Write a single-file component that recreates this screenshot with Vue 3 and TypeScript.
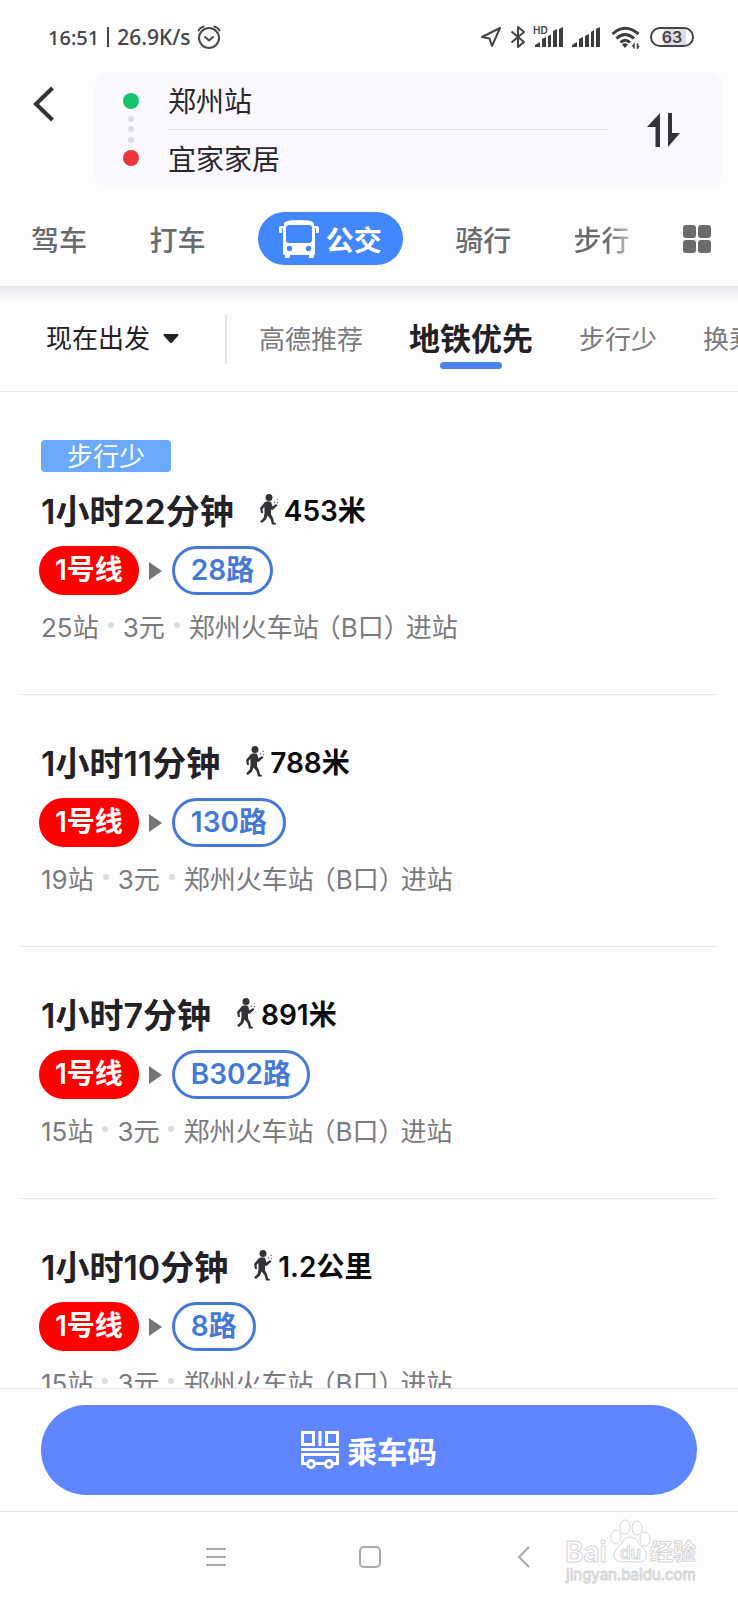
<script setup lang="ts">
import { ref } from 'vue'

interface Route {
  badge?: string
  duration: string
  walk: string
  metro: string
  bus: string
  stops: string
  fare: string
}

const modesBefore = ['驾车', '打车']
const modesAfter = ['骑行', '步行']
const filters = ['高德推荐', '地铁优先', '步行少', '换乘少']
const activeFilter = ref('地铁优先')

const entrance = { station: '郑州火车站', gate: '（B口）', action: '进站' }
const routes: Route[] = [
  { badge: '步行少', duration: '1小时22分钟', walk: '453米', metro: '1号线', bus: '28路', stops: '25站', fare: '3元' },
  { duration: '1小时11分钟', walk: '788米', metro: '1号线', bus: '130路', stops: '19站', fare: '3元' },
  { duration: '1小时7分钟', walk: '891米', metro: '1号线', bus: 'B302路', stops: '15站', fare: '3元' },
  { duration: '1小时10分钟', walk: '1.2公里', metro: '1号线', bus: '8路', stops: '15站', fare: '3元' },
]
</script>

<template>
  <div class="screen">
    <div class="status">
      <span class="clock">16:51</span>
      <span class="bar"></span>
      <span class="speed">26.9K/s</span>
      <svg class="alarm" width="26" height="26" viewBox="0 0 26 26" fill="none" stroke="#4a494c" stroke-width="2" stroke-linecap="round">
        <circle cx="13" cy="14" r="10" />
        <path d="M9 13l4 3.500 4-3.500M2.500 6.500Q4 3.500 7.500 2.500M23.500 6.500Q22 3.500 18.500 2.500" />
      </svg>
      <div class="signals">
        <svg width="22" height="22" viewBox="0 0 22 22" fill="none" stroke="#444347" stroke-width="2" stroke-linejoin="round">
          <path d="M20 2L2 11l7.500 1.500L12 20z" />
        </svg>
        <svg class="bt" width="16" height="24" viewBox="0 0 16 24" fill="none" stroke="#444347" stroke-width="2" stroke-linejoin="round">
          <path d="M1.500 6.500L14 17l-6 5V2l6 5L1.500 17.500" />
        </svg>
        <svg class="cell" width="30" height="24" viewBox="0 0 30 24" fill="#3d3c40">
          <path d="M2 22v-2l5-3v5zM9 22v-8l4-2v10zM15 22V11l3-1.500V22zM20 22V6l4-2v18zM26 22V4l4-2v20z" />
          <text x="0" y="9" font-size="10" font-weight="600">HD</text>
        </svg>
        <svg class="cell2" width="30" height="24" viewBox="0 0 30 24" fill="#3d3c40">
          <path d="M1 22v-2l5-3v5zM8 22v-8l4-2v10zM14 22V11l4-2v13zM20 22V7l3-2v17zM25 22V4l4-2v20z" />
        </svg>
        <svg class="wifi" width="30" height="24" viewBox="0 0 30 24" fill="none" stroke="#3d3c40" stroke-width="3">
          <path d="M1.500 9Q14 -2.500 27.500 9M5.500 13.500Q14 5.500 23 13.500M9.500 17.500Q14 13 19 17.500" />
          <path d="M11 19.500q3-2.500 6 0L14 23z" fill="#3d3c40" stroke="none" />
          <path d="M23 23.500v-4l-1.500 2M26.500 18.500v4.500l1.500-2" stroke-width="1.500" />
        </svg>
        <span class="battery">63</span>
      </div>
    </div>

    <header class="top">
      <div class="search">
        <button class="plain back" aria-label="返回">
          <svg width="24" height="36" viewBox="0 0 24 36" fill="none" stroke="#323136" stroke-width="4"><path d="M20.500 2L4 18l16.500 16" /></svg>
        </button>
        <div class="places">
          <svg class="trail" width="18" height="75" viewBox="0 0 18 75">
            <circle cx="9" cy="9" r="8" fill="#14c26c" />
            <g fill="#dddbdf"><circle cx="9" cy="27" r="3" /><circle cx="9" cy="37" r="3" /><circle cx="9" cy="48" r="3" /></g>
            <circle cx="9" cy="66" r="8" fill="#ea3639" />
          </svg>
          <div class="fields">
            <input class="place" type="text" value="郑州站" aria-label="起点" />
            <input class="place" type="text" value="宜家家居" aria-label="终点" />
          </div>
          <button class="plain swap" aria-label="交换起点和终点">
            <svg width="34" height="36" viewBox="0 0 34 36" fill="#333236"><path d="M13 1v34H8.500V15H0zM21 1h4v20h8L21 35z" /></svg>
          </button>
        </div>
      </div>

      <nav class="modes">
        <button v-for="m in modesBefore" :key="m" class="plain mode">{{ m }}</button>
        <button class="plain mode active">
          <svg width="42" height="40" viewBox="0 0 42 40">
            <path fill="#fff" d="M6 5Q6 1 21 1T36 5v2h3q2 0 2 2v4q0 1-1.500 1H38V9.500h-1V35q0 1-1 1v2q0 1-1 1h-3q-1 0-1-1v-2H12v2q0 1-1 1H8q-1 0-1-1v-2q-2 0-2-1V9.500H4V14H2.500Q1 14 1 13V9q0-2 2-2h3z" />
            <path fill="#4287fb" d="M11 6h20q3 0 3 3v12q0 3-3 3H11q-3 0-3-3V9q0-3 3-3z" />
            <circle cx="11.500" cy="29.500" r="2.700" fill="#4287fb" /><circle cx="30.500" cy="29.500" r="2.700" fill="#4287fb" />
          </svg>
          <span>公交</span>
        </button>
        <button v-for="m in modesAfter" :key="m" class="plain mode" :class="{ fading: m === '步行' }">{{ m }}</button>
        <button class="plain more" aria-label="更多出行方式">
          <svg width="28" height="28" viewBox="0 0 28 28" fill="#6b6a6d"><rect width="13" height="13" rx="3" /><rect x="15" width="13" height="13" rx="3" /><rect y="15" width="13" height="13" rx="3" /><rect x="15" y="15" width="13" height="13" rx="3" /></svg>
        </button>
      </nav>
    </header>

    <div class="filters">
      <button class="plain depart">
        现在出发
        <svg width="16" height="10" viewBox="0 0 16 10" fill="#222125"><path d="M1 0h14q1 1 0 2L9 8.500q-1 1-2 0L1 2q-1-1 0-2z" /></svg>
      </button>
      <div class="options">
        <button v-for="f in filters" :key="f" class="plain option" :class="{ chosen: f === activeFilter }" @click="activeFilter = f">{{ f }}</button>
      </div>
    </div>

    <main class="list">
      <article v-for="r in routes" :key="r.duration" class="route">
        <span v-if="r.badge" class="badge">{{ r.badge }}</span>
        <div class="headline">
          <h2>{{ r.duration }}</h2>
          <svg width="20" height="32" viewBox="0 0 20 32">
            <circle cx="10" cy="4.500" r="3.500" fill="#333236" />
            <path fill="#333236" d="M6 9q3-1.500 6 0l1.500 4.500L17 11l1.500 1.500-5 4.500-1.500-.5v5l2 3.500 1 4.500 2 .8V31.500h-4L11.500 26 8.500 22.500 7 26.500 3 30l-2-1.500L4.500 25l1-4.500V14L3.500 16 4 20H2l-1-5z" />
            <path d="M15 8.500l1 1M18 6l.5 1M18 10l1-1" stroke="#77757a" stroke-width="1.200" />
          </svg>
          <span class="distance">{{ r.walk }}</span>
        </div>
        <div class="lines">
          <span class="line metro">{{ r.metro }}</span>
          <svg width="13" height="20" viewBox="0 0 13 20" fill="#757477"><path d="M0 1l13 9-13 9z" /></svg>
          <span class="line bus">{{ r.bus }}</span>
        </div>
        <div class="meta">
          <span>{{ r.stops }}</span><i></i><span>{{ r.fare }}</span><i></i>
          <span>{{ entrance.station }}</span><span class="gate">{{ entrance.gate }}</span><span>{{ entrance.action }}</span>
        </div>
      </article>
    </main>

    <footer class="pay">
      <button class="plain code">
        <svg width="38" height="38" viewBox="0 0 38 38" fill="none" stroke="#fff" stroke-width="3">
          <path d="M1.500 1.500h11v12h-11zM25.500 1.500h11v12h-11zM19 0v15" />
          <path d="M0 18.500h38M5 32.500H1.500v-9h35v9H33M15 32.500h8" />
          <circle cx="10" cy="33" r="3.500" /><circle cx="28" cy="33" r="3.500" />
        </svg>
        <span>乘车码</span>
      </button>
    </footer>

    <nav class="system">
      <button class="plain" aria-label="最近任务"><svg width="22" height="22" viewBox="0 0 22 22" stroke="#a9a8ab" stroke-width="2"><path d="M1 3h20M1 11h20M1 19h20" /></svg></button>
      <button class="plain" aria-label="主屏幕"><svg width="22" height="22" viewBox="0 0 22 22" fill="none" stroke="#a9a8ab" stroke-width="2"><rect x="1" y="1" width="20" height="20" rx="4" /></svg></button>
      <button class="plain" aria-label="后退"><svg width="22" height="22" viewBox="0 0 22 22" fill="none" stroke="#a9a8ab" stroke-width="2"><path d="M16 1L6 11l10 10" /></svg></button>
      <svg class="mark" width="136" height="66" viewBox="0 0 136 66" fill="#fff" stroke="#d6d5d8" stroke-width="1">
        <text x="1" y="43" font-size="28" font-weight="600">Bai</text>
        <ellipse cx="52" cy="18" rx="5" ry="7" /><ellipse cx="61" cy="8" rx="5" ry="7" /><ellipse cx="73" cy="9" rx="5" ry="7" /><ellipse cx="81" cy="20" rx="5" ry="7" />
        <path d="M66 18q6 0 9 7 9 7 7 13-2 6-9 5-7-1-14 0-8 0-9-6 0-6 7-12 3-7 9-7z" />
        <text x="56" y="40" font-size="17" font-weight="600">du</text>
        <text x="86" y="41" font-size="23" font-weight="700">经验</text>
        <text x="2" y="61" font-size="15">jingyan.baidu.com</text>
      </svg>
    </nav>
  </div>
</template>

<style>
body {
  margin: 0;
  background: #fdfdfe;
}
</style>

<style scoped>
* {
  box-sizing: border-box;
}
.screen {
  display: flex;
  flex-direction: column;
  height: 100vh;
  overflow: hidden;
  background: #fdfdfe;
  color: #222125;
  font-family: Inter, "Noto Sans CJK SC", sans-serif;
}
svg {
  display: block;
  flex: none;
}
.plain {
  border: 0;
  padding: 0;
  background: none;
  color: inherit;
  font: inherit;
  white-space: nowrap;
}
.status {
  display: flex;
  align-items: center;
  height: 72px;
  padding: 2px 44px 0 48px;
  font-size: 20px;
  color: #444347;
}
.clock,
.speed {
  font-family: "Noto Sans", sans-serif;
  font-weight: 500;
}
.speed {
  font-size: 21px;
}
.bar {
  width: 2px;
  height: 20px;
  margin: 0 8px;
  background: #444347;
}
.alarm {
  margin-left: 5px;
}
.signals {
  display: flex;
  align-items: center;
  margin-left: auto;
}
.bt {
  margin-left: 8px;
}
.cell {
  margin-left: 7px;
}
.cell2 {
  margin-left: 8px;
}
.wifi {
  margin: 0 9px 0 10px;
}
.battery {
  width: 44px;
  height: 20px;
  border: 2px solid #444347;
  border-radius: 10px;
  background: linear-gradient(90deg, #fdfdfe 30%, #dfdee1 30%, #dfdee1 85%, #fdfdfe 85%);
  font-size: 16px;
  line-height: 16px;
  font-weight: 600;
  text-align: center;
}
.top {
  flex: none;
  height: 214px;
}
.search {
  display: flex;
  align-items: flex-start;
  padding: 0 16px 0 32px;
}
.back {
  width: 63px;
  padding-top: 14px;
}
.places {
  flex: 1;
  display: flex;
  align-items: center;
  height: 115px;
  padding: 0 41px 0 27px;
  border-radius: 12px;
  background: #faf8fc;
}
.fields {
  flex: 1;
  min-width: 0;
  margin: 0 40px 2px 28px;
}
.place {
  display: block;
  width: 100%;
  height: 57px;
  border: 0;
  padding: 0;
  background: none;
  color: #29282c;
  font: inherit;
  font-size: 28px;
  outline: 0;
}
.place + .place {
  border-top: 1px solid #e2e0e4;
}
.modes {
  display: flex;
  align-items: center;
  justify-content: space-between;
  height: 53px;
  margin-top: 25px;
  padding: 0 27px 0 31px;
  color: #6b6a6d;
  font-size: 28px;
  font-weight: 500;
}
.more {
  margin-left: -9px;
}
.active {
  display: flex;
  align-items: center;
  gap: 6px;
  height: 53px;
  margin: 0 -10px;
  padding: 0 21px 0 20px;
  border-radius: 27px;
  background: #4287fb;
  color: #fff;
  font-weight: 700;
}
.fading {
  background: linear-gradient(90deg, #6b6a6d 60%, #c4c3c6);
  background-clip: text;
  color: transparent;
}
.filters {
  display: flex;
  flex: none;
  align-items: center;
  height: 106px;
  padding-left: 46px;
  border-bottom: 1px solid #e9e8eb;
  background: linear-gradient(#e9e7eb, #fdfdfe 16px);
  font-size: 26px;
}
.depart {
  display: flex;
  align-items: center;
  gap: 13px;
  padding-right: 46px;
  line-height: 50px;
  border-right: 2px solid #e6e5e8;
}
.options {
  display: flex;
  flex: 1;
  min-width: 0;
  align-items: center;
  gap: 46px;
  padding: 0 0 2px 32px;
  overflow: hidden;
}
.option {
  flex: none;
  color: #7b7a7d;
}
.chosen {
  display: flex;
  flex-direction: column;
  align-items: center;
  color: #222125;
  font-size: 31px;
  font-weight: 700;
  line-height: 46px;
  padding-top: 10px;
}
.chosen::after {
  content: "";
  width: 62px;
  height: 7px;
  border-radius: 4px;
  background: #4a84ea;
}
.list {
  flex: 1;
  min-height: 0;
  overflow: hidden;
}
.route {
  margin: 0 20px;
  padding: 48px 0 53px 21px;
  border-bottom: 1px solid #e9e8eb;
}
.badge {
  display: block;
  width: max-content;
  height: 32px;
  margin-bottom: 19px;
  padding: 0 26px;
  border-radius: 4px;
  background: #6aa9fb;
  color: #fff;
  font-size: 26px;
  line-height: 34px;
}
.headline {
  display: flex;
  align-items: center;
  height: 36px;
}
h2 {
  margin: 0 25px 0 0;
  font-size: 34px;
  font-weight: 600;
}
.distance {
  margin-left: 5px;
  color: #0c0c0e;
  font-size: 28px;
  font-weight: 600;
}
.lines {
  display: flex;
  align-items: center;
  margin: 19px 0 14px -2px;
}
.lines svg {
  margin: 0 10px;
}
.line {
  height: 49px;
  border: 3px solid #f00;
  border-radius: 25px;
  font-size: 28px;
  font-weight: 600;
  line-height: 43px;
}
.metro {
  padding: 0 13px;
  background: #f00;
  color: #fff;
}
.bus {
  padding: 0 16px;
  border-color: #4679d6;
  color: #4679d6;
}
.meta {
  display: flex;
  align-items: center;
  height: 32px;
  color: #7b7a7d;
  font-size: 26px;
  white-space: nowrap;
}
.meta i {
  width: 6px;
  height: 6px;
  margin: 0 9px;
  border-radius: 50%;
  background: #dddbdf;
}
.gate {
  margin: 0 -4px;
}
.pay {
  flex: none;
  padding: 16px 41px;
  border: solid #e8e4ea;
  border-width: 1px 0;
}
.code {
  display: flex;
  align-items: center;
  justify-content: center;
  gap: 8px;
  width: 100%;
  height: 90px;
  border-radius: 45px;
  background: #5f86fe;
  color: #fff;
  font-size: 30px;
  font-weight: 700;
}
.system {
  position: relative;
  display: flex;
  flex: none;
  align-items: center;
  justify-content: center;
  gap: 106px;
  height: 88px;
  padding: 2px 0 0 2px;
}
.system .plain {
  display: grid;
  place-items: center;
  width: 48px;
  height: 48px;
}
.mark {
  position: absolute;
  right: 38px;
  top: 7px;
}
</style>
